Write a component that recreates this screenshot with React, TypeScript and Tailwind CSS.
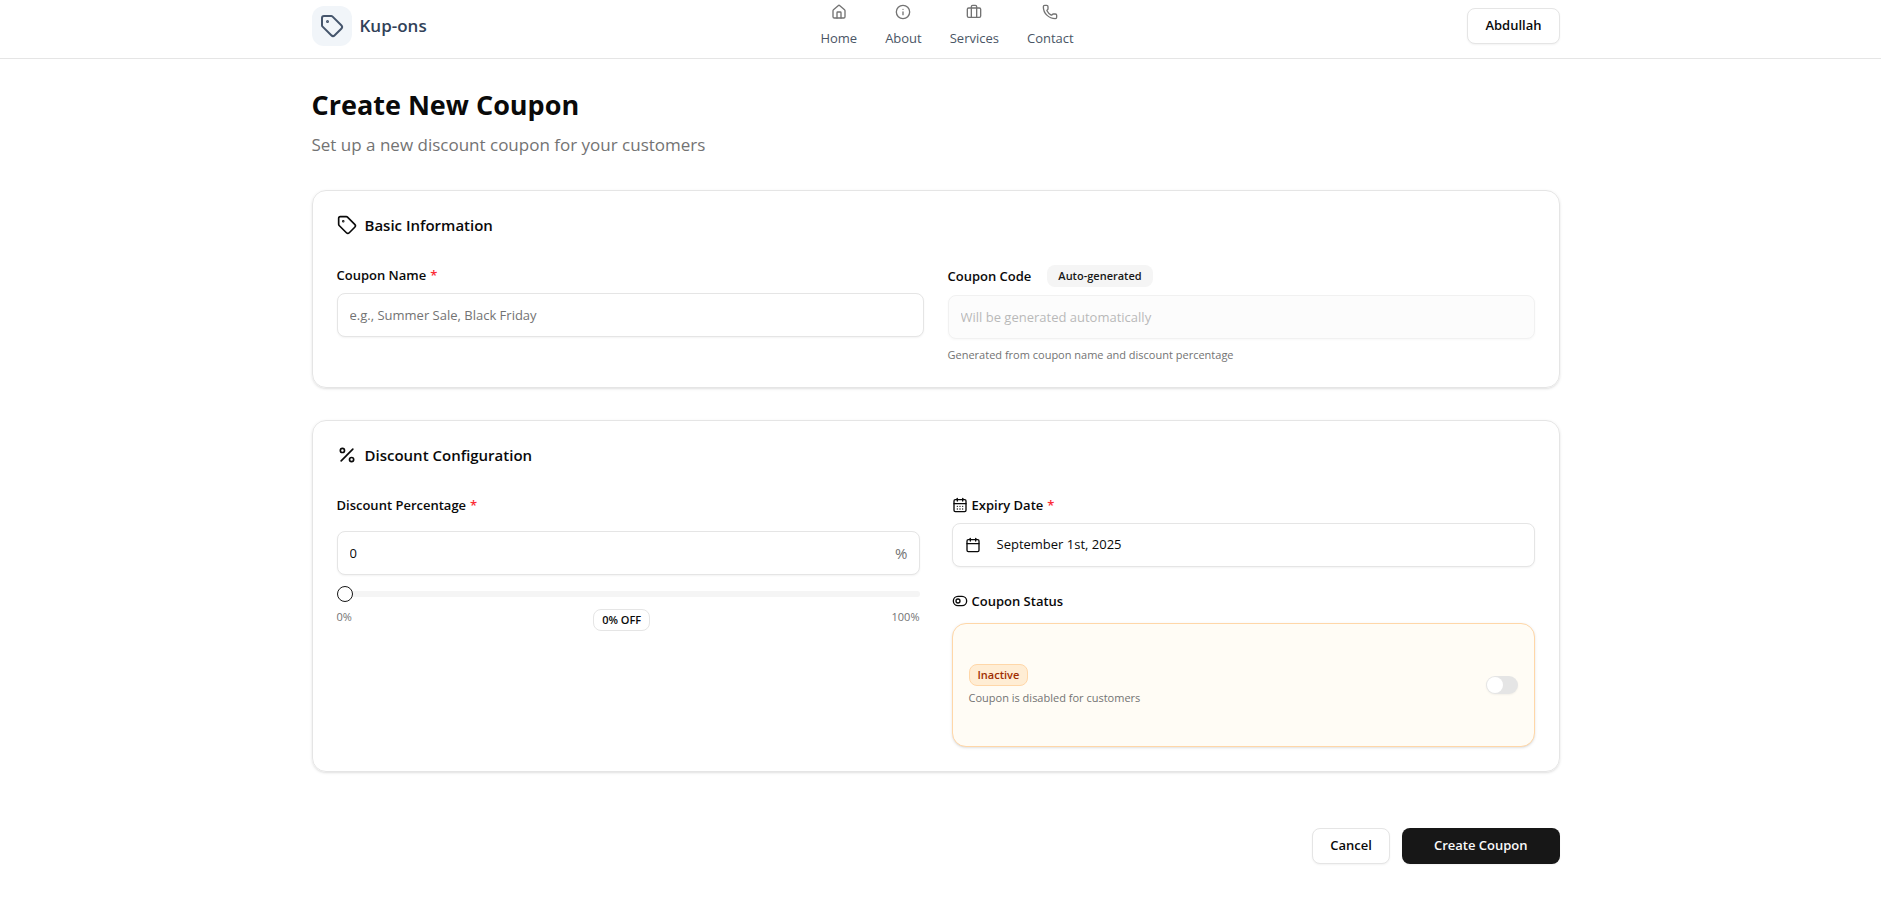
import { useState, type ReactNode } from "react";
import {
  Briefcase,
  Calendar,
  CalendarDays,
  House,
  Info,
  Percent,
  Phone,
  Tag,
  ToggleLeft,
  type LucideIcon,
} from "lucide-react";

const navItems: { label: string; icon: LucideIcon }[] = [
  { label: "Home", icon: House },
  { label: "About", icon: Info },
  { label: "Services", icon: Briefcase },
  { label: "Contact", icon: Phone },
];

const fieldClass =
  "h-11 w-full rounded-lg border border-neutral-200 bg-white px-3 text-[13px] shadow-xs placeholder:text-neutral-500";
const labelClass = "flex items-center gap-1 text-[13px] leading-5 font-semibold";
const badgeClass = "flex h-[22px] items-center rounded-lg border text-[11px] leading-4 font-semibold";
const outlineButtonClass =
  "h-9 rounded-lg border border-neutral-200 bg-white px-[17px] text-[13px] font-semibold shadow-xs";

function Required() {
  return <span className="text-[#fb2c36]">*</span>;
}

function Card({ title, icon: Icon, children }: { title: string; icon: LucideIcon; children: ReactNode }) {
  return (
    <section className="rounded-[14px] border border-neutral-200 p-6 shadow-sm">
      <h2 className="mb-[30px] flex items-center gap-2 text-[15px] leading-5 font-semibold">
        <Icon size={20} />
        {title}
      </h2>
      {children}
    </section>
  );
}

function Header() {
  return (
    <header className="border-b border-neutral-200 pr-2.5">
      <div className="mx-auto flex max-w-[1280px] items-center justify-between px-4 pt-1 pb-2.5">
        <a href="#" className="flex items-center gap-2">
          <span className="flex size-10 items-center justify-center rounded-xl bg-slate-100 text-slate-600">
            <Tag size={24} />
          </span>
          <span className="text-[17px] font-semibold text-slate-700">Kup-ons</span>
        </a>
        <nav className="flex gap-7">
          {navItems.map(({ label, icon: Icon }) => (
            <a key={label} href="#" className="flex flex-col items-center gap-2 text-[13px] leading-5 text-gray-600">
              <Icon size={16} className="text-neutral-500" />
              {label}
            </a>
          ))}
        </nav>
        <button type="button" className={outlineButtonClass}>
          Abdullah
        </button>
      </div>
    </header>
  );
}

export default function App() {
  const [name, setName] = useState("");
  const [discount, setDiscount] = useState(0);
  const [active, setActive] = useState(false);

  return (
    <div className="bg-white font-['Open_Sans','Noto_Sans',sans-serif] text-neutral-950">
      <Header />
      <main className="pr-2.5">
        <form className="mx-auto max-w-[1280px] px-4 pt-7 pb-11" onSubmit={(e) => e.preventDefault()}>
          <h1 className="text-[27px] leading-9 font-bold">Create New Coupon</h1>
          <p className="mt-2 mb-[31px] text-[17px] leading-7 text-neutral-500">
            Set up a new discount coupon for your customers
          </p>

          <div className="flex flex-col gap-8">
            <Card title="Basic Information" icon={Tag}>
              <div className="grid grid-cols-1 gap-6 md:grid-cols-2">
                <div className="flex flex-col gap-2">
                  <label htmlFor="name" className={labelClass}>
                    Coupon Name <Required />
                  </label>
                  <input
                    id="name"
                    value={name}
                    onChange={(e) => setName(e.target.value)}
                    placeholder="e.g., Summer Sale, Black Friday"
                    className={fieldClass}
                  />
                </div>
                <div className="flex flex-col gap-2">
                  <div className="flex items-center gap-4">
                    <label htmlFor="code" className={labelClass}>
                      Coupon Code
                    </label>
                    <span className={`${badgeClass} border-transparent bg-neutral-100 px-2.5 text-neutral-900`}>
                      Auto-generated
                    </span>
                  </div>
                  <input
                    id="code"
                    disabled
                    placeholder="Will be generated automatically"
                    className="h-11 w-full rounded-lg border border-neutral-200 bg-neutral-50 px-3 text-[13px] opacity-50 shadow-xs placeholder:text-neutral-500"
                  />
                  <p className="text-[11px] leading-4 text-neutral-500">
                    Generated from coupon name and discount percentage
                  </p>
                </div>
              </div>
            </Card>

            <Card title="Discount Configuration" icon={Percent}>
              <div className="grid grid-cols-1 gap-8 md:grid-cols-2">
                <div>
                  <label htmlFor="discount" className={labelClass}>
                    Discount Percentage <Required />
                  </label>
                  <div className="relative mt-4">
                    <input
                      id="discount"
                      inputMode="numeric"
                      value={discount}
                      onChange={(e) => setDiscount(Math.min(100, Number(e.target.value) || 0))}
                      className={fieldClass}
                    />
                    <span className="pointer-events-none absolute inset-y-0 right-3 flex items-center text-[15px] text-neutral-500">
                      %
                    </span>
                  </div>
                  <input
                    type="range"
                    aria-label="Discount percentage"
                    min={0}
                    max={100}
                    value={discount}
                    onChange={(e) => setDiscount(Number(e.target.value))}
                    className="mt-3 block h-3.5 w-full appearance-none bg-transparent [&::-webkit-slider-runnable-track]:h-1.5 [&::-webkit-slider-runnable-track]:rounded-full [&::-webkit-slider-runnable-track]:bg-neutral-100 [&::-webkit-slider-thumb]:-mt-[5px] [&::-webkit-slider-thumb]:size-4 [&::-webkit-slider-thumb]:appearance-none [&::-webkit-slider-thumb]:rounded-full [&::-webkit-slider-thumb]:border [&::-webkit-slider-thumb]:border-neutral-900 [&::-webkit-slider-thumb]:bg-white"
                  />
                  <div className="mt-2 flex items-start justify-between text-[11px] leading-4 text-neutral-500">
                    <span>0%</span>
                    <span className={`${badgeClass} border-neutral-200 px-2 text-neutral-950`}>{discount}% OFF</span>
                    <span>100%</span>
                  </div>
                </div>

                <div className="flex flex-col gap-6">
                  <div className="flex flex-col gap-2">
                    <label htmlFor="expiry" className={labelClass}>
                      <CalendarDays size={16} />
                      Expiry Date <Required />
                    </label>
                    <button
                      id="expiry"
                      type="button"
                      className="flex h-11 w-full items-center gap-4 rounded-lg border border-neutral-200 bg-white px-3 text-[13px] shadow-xs"
                    >
                      <Calendar size={16} />
                      September 1st, 2025
                    </button>
                  </div>
                  <div className="flex flex-col gap-3">
                    <label htmlFor="status" className={labelClass}>
                      <ToggleLeft size={16} />
                      Coupon Status
                    </label>
                    <div className="flex h-[124px] items-center justify-between rounded-[14px] border border-orange-200 bg-[#fffcf5] px-4 shadow-sm">
                      <div className="flex flex-col items-start gap-1">
                        <span className={`${badgeClass} border-orange-200 bg-orange-100 px-2 text-orange-800`}>
                          {active ? "Active" : "Inactive"}
                        </span>
                        <p className="text-[11px] leading-4 text-neutral-500">
                          {active ? "Coupon is enabled for customers" : "Coupon is disabled for customers"}
                        </p>
                      </div>
                      <input
                        id="status"
                        type="checkbox"
                        role="switch"
                        checked={active}
                        onChange={(e) => setActive(e.target.checked)}
                        className="flex h-[18px] w-8 appearance-none items-center rounded-full border border-transparent bg-neutral-200 shadow-xs before:size-4 before:rounded-full before:bg-white checked:bg-neutral-900 checked:before:ml-auto"
                      />
                    </div>
                  </div>
                </div>
              </div>
            </Card>
          </div>

          <div className="mt-14 flex justify-end gap-3">
            <button type="button" className={outlineButtonClass}>
              Cancel
            </button>
            <button
              type="submit"
              className="h-9 rounded-lg bg-neutral-900 px-8 text-[13px] font-semibold text-neutral-50 shadow-xs"
            >
              Create Coupon
            </button>
          </div>
        </form>
      </main>
    </div>
  );
}
